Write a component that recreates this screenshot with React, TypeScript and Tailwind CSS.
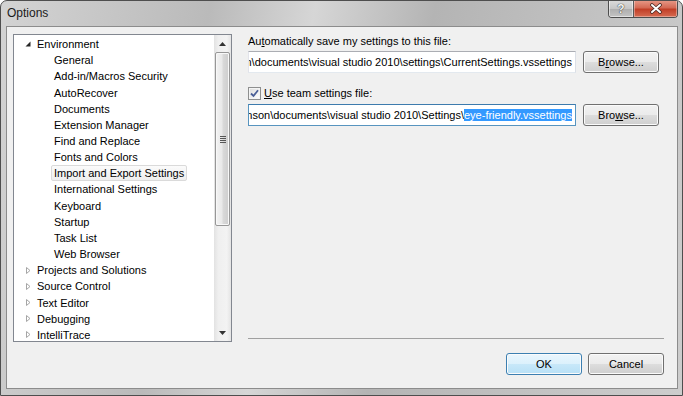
import { ReactNode } from 'react'

const TREE: { label: string; level: number; arrow?: 'open' | 'closed'; selected?: boolean }[] = [
  { label: 'Environment', level: 0, arrow: 'open' },
  { label: 'General', level: 1 },
  { label: 'Add-in/Macros Security', level: 1 },
  { label: 'AutoRecover', level: 1 },
  { label: 'Documents', level: 1 },
  { label: 'Extension Manager', level: 1 },
  { label: 'Find and Replace', level: 1 },
  { label: 'Fonts and Colors', level: 1 },
  { label: 'Import and Export Settings', level: 1, selected: true },
  { label: 'International Settings', level: 1 },
  { label: 'Keyboard', level: 1 },
  { label: 'Startup', level: 1 },
  { label: 'Task List', level: 1 },
  { label: 'Web Browser', level: 1 },
  { label: 'Projects and Solutions', level: 0, arrow: 'closed' },
  { label: 'Source Control', level: 0, arrow: 'closed' },
  { label: 'Text Editor', level: 0, arrow: 'closed' },
  { label: 'Debugging', level: 0, arrow: 'closed' },
  { label: 'IntelliTrace', level: 0, arrow: 'closed' },
]

function Arrow({ kind }: { kind?: 'open' | 'closed' }) {
  if (!kind) return <span className="w-[12px] shrink-0" />
  return (
    <span className="flex w-[12px] shrink-0 items-center justify-center">
      {kind === 'open' ? (
        <svg width="8" height="8" viewBox="0 0 8 8">
          <path d="M6.5 1.5 L6.5 6.5 L1.5 6.5 Z" fill="#262626" />
        </svg>
      ) : (
        <svg width="8" height="9" viewBox="0 0 8 9">
          <path d="M2.5 1.5 L6 4.5 L2.5 7.5 Z" fill="#fff" stroke="#a6a6a6" strokeWidth="1" />
        </svg>
      )}
    </span>
  )
}

function Win7Button({ children, primary }: { children: ReactNode; primary?: boolean }) {
  return (
    <button
      className={`flex h-[22px] w-[76px] items-center justify-center rounded-[3px] border text-[11px] text-black shadow-[inset_0_0_0_1px_#fbfbfb] ${
        primary
          ? 'border-[#3c7fb1] bg-[linear-gradient(180deg,#eaf6fd_0%,#dcf1fc_49%,#c8e8f9_50%,#b8e0f6_100%)]'
          : 'border-[#707070] bg-[linear-gradient(180deg,#f2f2f2_0%,#ebebeb_49%,#dddddd_50%,#cfcfcf_100%)]'
      }`}
    >
      {children}
    </button>
  )
}

export default function App() {
  return (
    <div className="font-['Segoe_UI','Liberation_Sans',sans-serif]">
      <div className="flex h-[396px] w-[683px] flex-col overflow-hidden rounded-t-[7px] border border-[#4e4e4e] bg-[linear-gradient(100deg,#d3d3d3_0%,#bababa_28%,#d6d6d6_42%,#b4b4b4_58%,#c2c2c2_80%,#cdcdcd_100%)]">
        {/* Title bar */}
        <div className="flex h-[25px] shrink-0 items-start pl-[6px] pr-[4px]">
          <span className="mt-[5px] text-[12px] leading-[15px] text-[#1b1b1b]">Options</span>
          <div className="-mt-[1px] ml-auto flex h-[18px] overflow-hidden rounded-b-[4px] border border-t-0 border-[#4d4d4d]">
            <div className="flex w-[25px] items-center justify-center border-r border-[#5a5a5a] bg-[linear-gradient(180deg,#dcdcdc_0%,#c6c6c6_50%,#adadad_51%,#c4c4c4_100%)] shadow-[inset_0_0_0_1px_rgba(255,255,255,0.5)]">
              <span className="text-[12px] font-bold leading-none text-[#f4f4f4] [text-shadow:0_0_1px_#333,0_0_1px_#333]">?</span>
            </div>
            <div className="flex w-[43px] items-center justify-center bg-[linear-gradient(180deg,#e89c8a_0%,#d46a55_45%,#c13f27_55%,#d66b51_100%)] shadow-[inset_0_0_0_1px_rgba(255,255,255,0.35)]">
              <svg width="14" height="11" viewBox="0 0 14 11">
                <path d="M3 2 L11 9 M11 2 L3 9" stroke="#4a2a24" strokeWidth="3.6" strokeLinecap="round" />
                <path d="M3 2 L11 9 M11 2 L3 9" stroke="#fff" strokeWidth="2" strokeLinecap="round" />
              </svg>
            </div>
          </div>
        </div>

        {/* Frame body */}
        <div className="flex flex-1 pb-[6px] pl-[5px] pr-[4px]">
          <div className="flex flex-1 flex-col border border-[#8c8c8c] bg-[#f0f0f0] text-[11px] text-black">
            <div className="flex pl-[6px] pt-[7px]">
              {/* Tree */}
              <div className="flex h-[308px] w-[219px] border border-[#828790] bg-white">
                <div className="flex-1 overflow-hidden pt-[1px]">
                  {TREE.map((item) => (
                    <div
                      key={item.label}
                      className="flex h-[16.17px] items-stretch"
                      style={{ paddingLeft: 8 + item.level * 17 }}
                    >
                      <Arrow kind={item.arrow} />
                      <span
                        className={`flex items-center whitespace-nowrap rounded-[2px] border px-[2px] leading-[14px] ${
                          item.selected
                            ? 'border-[#dadada] bg-[linear-gradient(180deg,#fbfbfb,#eeeeee)]'
                            : 'border-transparent'
                        }`}
                      >
                        {item.label}
                      </span>
                    </div>
                  ))}
                </div>
                <div className="flex w-[17px] flex-col bg-[linear-gradient(90deg,#e2e2e2,#efefef_25%,#f3f3f3_75%,#e4e4e4)]">
                  <div className="flex h-[17px] items-center justify-center">
                    <svg width="7" height="4" viewBox="0 0 7 4">
                      <path d="M0 4 L3.5 0 L7 4 Z" fill="#333" />
                    </svg>
                  </div>
                  <div className="mx-[1px] flex h-[174px] items-center justify-center rounded-[2px] border border-[#979797] bg-[linear-gradient(90deg,#f3f3f3,#e9e9e9_45%,#d9d9d9_55%,#cdcdcd)] shadow-[inset_0_0_0_1px_#f8f8f8]">
                    <div className="flex flex-col gap-[1px]">
                      <div className="h-[1px] w-[6px] bg-[#555]" />
                      <div className="h-[1px] w-[6px] bg-[#555]" />
                      <div className="h-[1px] w-[6px] bg-[#555]" />
                      <div className="h-[1px] w-[6px] bg-[#555]" />
                    </div>
                  </div>
                  <div className="flex-1" />
                  <div className="flex h-[17px] items-center justify-center">
                    <svg width="7" height="4" viewBox="0 0 7 4">
                      <path d="M0 0 L7 0 L3.5 4 Z" fill="#333" />
                    </svg>
                  </div>
                </div>
              </div>

              {/* Settings */}
              <div className="ml-[16px] flex w-[416px] flex-col">
                <div className="h-[15px] leading-[15px]">
                  Au<u>t</u>omatically save my settings to this file:
                </div>
                <div className="mt-[2px] flex items-center gap-[7px]">
                  <div className="flex h-[22px] w-[328px] items-center justify-end overflow-hidden border border-[#abadb3] border-b-[#e3e9ef] border-l-[#e2e3ea] border-r-[#dbdfe6] bg-white pr-[3px]">
                    <span className="whitespace-nowrap">
                      C:\Users\ptrobinson\documents\visual studio 2010\settings\CurrentSettings.vssettings
                    </span>
                  </div>
                  <Win7Button>
                    B<u>r</u>owse...
                  </Win7Button>
                </div>

                <div className="mt-[13px] flex h-[15px] items-center gap-[3px]">
                  <div className="flex h-[13px] w-[13px] items-center justify-center border border-[#8e8f8f] bg-[linear-gradient(135deg,#dcdcdc,#ffffff)] shadow-[inset_0_0_0_1px_#f4f4f4]">
                    <svg width="9" height="9" viewBox="0 0 9 9">
                      <path d="M1 4.5 L3.5 7 L8 1.2" fill="none" stroke="#4a5f97" strokeWidth="1.8" />
                    </svg>
                  </div>
                  <span className="leading-[15px]">
                    <u>U</u>se team settings file:
                  </span>
                </div>
                <div className="mt-[3px] flex items-center gap-[7px]">
                  <div className="flex h-[22px] w-[328px] items-center justify-end overflow-hidden border border-[#5794bf] border-t-[#3d7bad] bg-white pr-[3px]">
                    <span className="whitespace-nowrap">
                      C:\Users\ptrobinson\documents\visual studio 2010\Settings\
                      <span className="bg-[#3399ff] text-white">eye-friendly.vssettings</span>
                    </span>
                  </div>
                  <Win7Button>
                    Bro<u>w</u>se...
                  </Win7Button>
                </div>

                <div className="mb-[2px] mt-auto h-[2px] border-t border-[#a0a0a0] border-b-white" />
              </div>
            </div>

            {/* Footer buttons */}
            <div className="mt-[11px] flex justify-end gap-[6px] pr-[13px]">
              <Win7Button primary>OK</Win7Button>
              <Win7Button>Cancel</Win7Button>
            </div>
          </div>
        </div>
      </div>
    </div>
  )
}
